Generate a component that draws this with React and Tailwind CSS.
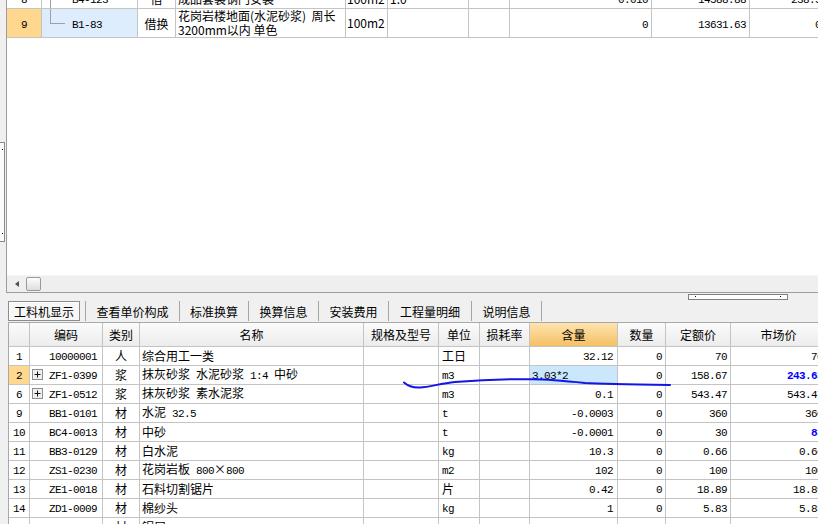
import React from 'react';

const mono = "font-['Liberation_Mono',monospace] text-[11px] tracking-[-0.6px]";
const cjk = "font-['Noto_Sans_CJK_SC',sans-serif] text-[12px]";
const cell = 'shrink-0 h-full border-r border-[#c4c4c4] flex items-center overflow-hidden whitespace-nowrap';

// splits a string into ascii (mono) and chinese runs, like the grid's mixed font
function T({ s, sans, className = '' }) {
  if (sans) return <span className={`${cjk} leading-[14px] ${className}`}>{s}</span>;
  const parts = String(s).split(/([\x20-\x7e]+)/).filter(Boolean);
  return (
    <span className={`leading-[14px] ${className}`}>
      {parts.map((p, i) =>
        /^[\x20-\x7e]+$/.test(p)
          ? <span key={i} className={mono}>{p}</span>
          : <span key={i} className={cjk}>{p}</span>
      )}
    </span>
  );
}

function Plus() {
  return (
    <svg width="11" height="11" viewBox="0 0 11 11" className="shrink-0">
      <rect x="0.5" y="0.5" width="10" height="10" fill="#efefef" stroke="#8e8e8e" />
      <path d="M2.5 5.5h6M5.5 2.5v6" stroke="#111" strokeWidth="1" />
    </svg>
  );
}

const rows = [
  { n: '1', code: '10000001', type: '人', name: '综合用工一类', unit: '工日', qty: '32.12', num: '0', price: '70', market: '70' },
  { n: '2', plus: true, sel: true, code: 'ZF1-0399', type: '浆', name: '抹灰砂浆 水泥砂浆 1:4 中砂', unit: 'm3', qty: '3.03*2', num: '0', price: '158.67', market: '243.63', blue: true },
  { n: '6', plus: true, code: 'ZF1-0512', type: '浆', name: '抹灰砂浆 素水泥浆', unit: 'm3', qty: '0.1', num: '0', price: '543.47', market: '543.47' },
  { n: '9', code: 'BB1-0101', type: '材', name: '水泥 32.5', unit: 't', qty: '-0.0003', num: '0', price: '360', market: '360' },
  { n: '10', code: 'BC4-0013', type: '材', name: '中砂', unit: 't', qty: '-0.0001', num: '0', price: '30', market: '83', blue: true },
  { n: '11', code: 'BB3-0129', type: '材', name: '白水泥', unit: 'kg', qty: '10.3', num: '0', price: '0.66', market: '0.66' },
  { n: '12', code: 'ZS1-0230', type: '材', name: '花岗岩板 800×800', unit: 'm2', qty: '102', num: '0', price: '100', market: '100' },
  { n: '13', code: 'ZE1-0018', type: '材', name: '石料切割锯片', unit: '片', qty: '0.42', num: '0', price: '18.89', market: '18.89' },
  { n: '14', code: 'ZD1-0009', type: '材', name: '棉纱头', unit: 'kg', qty: '1', num: '0', price: '5.83', market: '5.83' },
  { n: '15', code: 'ZA1-0040', type: '材', name: '锯屑', unit: 'm3', qty: '0.6', num: '0', price: '44.5', market: '44.5' },
];

const tabs = [
  { label: '查看单价构成', w: 'w-[93px]' },
  { label: '标准换算', w: 'w-[68px]' },
  { label: '换算信息', w: 'w-[69px]' },
  { label: '安装费用', w: 'w-[69px]' },
  { label: '工程量明细', w: 'w-[82px]' },
  { label: '说明信息', w: 'w-[69px]' },
];

function TopRow8() {
  return (
    <div className="flex h-[20px] -mt-[11px] border-b border-[#c4c4c4] shrink-0">
      <div className={`w-[35px] ${cell} justify-center`}><T s="8" /></div>
      <div className={`w-[96px] ${cell}`}>
        <div className="ml-[8px] w-px h-full bg-[#a0a0a0] shrink-0" />
        <T s="B4-123" className="ml-[21px]" />
      </div>
      <div className={`w-[38px] ${cell} justify-center`}><T s="借" /></div>
      <div className={`w-[170px] ${cell} pl-[2px]`}><T s="成品套装钢门安装" sans /></div>
      <div className={`w-[42px] ${cell} pl-[1px]`}><T s="100m2" sans /></div>
      <div className={`w-[81px] ${cell} pl-[2px]`}><T s="1.0" sans /></div>
      <div className={`w-[41px] ${cell}`} />
      <div className={`w-[142px] ${cell} justify-end pr-[3px]`}><T s="0.010" /></div>
      <div className={`w-[98px] ${cell} justify-end pr-[3px]`}><T s="14588.88" /></div>
      <div className={`w-[75px] ${cell} justify-end pr-[3px]`}><T s="238.5" /></div>
    </div>
  );
}

function TopRow9() {
  return (
    <div className="flex h-[29px] border-b border-[#c4c4c4] shrink-0">
      <div className={`w-[35px] ${cell} justify-center bg-[#ffd78f]`}><T s="9" /></div>
      <div className={`w-[96px] ${cell} bg-[#ddedfd]`}>
        <div className="ml-[8px] w-[15px] h-[15px] border-l border-b border-[#a0a0a0] self-start shrink-0" />
        <T s="B1-83" className="ml-[7px]" />
      </div>
      <div className={`w-[38px] ${cell} justify-center`}><T s="借换" /></div>
      <div className={`w-[170px] ${cell} pl-[2px] whitespace-normal`}>
        <div className={`${cjk} leading-[14px] text-black`}>
          <div className="whitespace-pre">花岗岩楼地面(水泥砂浆)  周长</div>
          <div className="whitespace-nowrap">3200mm以内 单色</div>
        </div>
      </div>
      <div className={`w-[42px] ${cell} pl-[1px]`}><T s="100m2" sans /></div>
      <div className={`w-[81px] ${cell}`} />
      <div className={`w-[41px] ${cell}`} />
      <div className={`w-[142px] ${cell} justify-end pr-[3px]`}><T s="0" /></div>
      <div className={`w-[98px] ${cell} justify-end pr-[3px]`}><T s="13631.63" /></div>
      <div className={`w-[75px] ${cell} justify-end pr-[3px]`}><T s="0" /></div>
    </div>
  );
}

function HeaderRow() {
  const h = `${cell} justify-center`;
  return (
    <div className="flex h-[24px] border-b border-[#c4c4c4] bg-gradient-to-b from-[#fbfbfb] to-[#ececec]">
      <div className={`w-[21px] ${h}`} />
      <div className={`w-[73px] ${h}`}><T s="编码" /></div>
      <div className={`w-[37px] ${h}`}><T s="类别" /></div>
      <div className={`w-[224px] ${h}`}><T s="名称" /></div>
      <div className={`w-[75px] ${h}`}><T s="规格及型号" /></div>
      <div className={`w-[41px] ${h}`}><T s="单位" /></div>
      <div className={`w-[50px] ${h}`}><T s="损耗率" /></div>
      <div className={`w-[88px] ${h} bg-gradient-to-b from-[#fde4ad] to-[#f4c062]`}><T s="含量" /></div>
      <div className={`w-[48px] ${h}`}><T s="数量" /></div>
      <div className={`w-[65px] ${h}`}><T s="定额价" /></div>
      <div className={`w-[96px] ${h}`}><T s="市场价" /></div>
    </div>
  );
}

function DataRow({ r }) {
  const c = `${cell} pb-px`;
  return (
    <div className="flex h-[19px] border-b border-[#c4c4c4] bg-white text-black">
      <div className={`w-[21px] ${c} justify-center ${r.sel ? 'bg-[#ffd78f]' : ''}`}><T s={r.n} /></div>
      <div className={`w-[73px] ${c} pl-[2px]`}>
        {r.plus ? <Plus /> : <span className="w-[11px] shrink-0" />}
        <T s={r.code} className="ml-[6px]" />
      </div>
      <div className={`w-[37px] ${c} justify-center`}><T s={r.type} /></div>
      <div className={`w-[224px] ${c} pl-[2px]`}><T s={r.name} /></div>
      <div className={`w-[75px] ${c}`} />
      <div className={`w-[41px] ${c} pl-[3px]`}><T s={r.unit} /></div>
      <div className={`w-[50px] ${c}`} />
      {r.sel ? (
        <div className={`w-[88px] ${c} pl-[2px] pb-[2px] bg-[#cae7fb]`}><T s={r.qty} /></div>
      ) : (
        <div className={`w-[88px] ${c} justify-end pr-[4px]`}><T s={r.qty} /></div>
      )}
      <div className={`w-[48px] ${c} justify-end pr-[3px]`}><T s={r.num} /></div>
      <div className={`w-[65px] ${c} justify-end pr-[3px]`}><T s={r.price} /></div>
      <div className={`w-[96px] ${c} justify-end pr-[3px]`}>
        <T s={r.market} className={r.blue ? 'text-[#0000ff] font-bold' : ''} />
      </div>
    </div>
  );
}

export default function App() {
  return (
    <div className="relative w-[818px] h-[524px] overflow-hidden bg-[#f0f0f0] text-black">

      {/* ── Upper grid (quota list) ── */}
      <div className="ml-[6px] h-[293px] border-l border-b border-[#9c9c9c] bg-white flex flex-col overflow-hidden">
        <TopRow8 />
        <TopRow9 />
        <div className="flex-1" />
        <div className="h-[17px] shrink-0 bg-[#efefef] border-t border-[#f6f6f6] flex items-center">
          <svg width="4" height="6" viewBox="0 0 4 6" className="ml-[8px] shrink-0">
            <path d="M4 0v6L0 3z" fill="#505050" />
          </svg>
          <div className="ml-[7px] w-[15px] h-[14px] rounded-[2px] border border-[#9a9a9a] bg-gradient-to-b from-[#fdfdfd] to-[#dedede]" />
        </div>
      </div>

      {/* ── Tabs ── */}
      <div className="relative h-[29px] flex items-start pt-[8px]">
        <div className="ml-[8px] w-[72px] h-[20px] border border-[#8c8c8c] bg-[#f7f7f7] shadow-[inset_1px_1px_0_#fff] flex items-center justify-center">
          <T s="工料机显示" />
        </div>
        <div className="ml-[5px] w-px h-[20px] bg-[#a4a4a4]" />
        {tabs.map(t => (
          <React.Fragment key={t.label}>
            <div className={`${t.w} h-[20px] flex items-center justify-center`}><T s={t.label} /></div>
            <div className="w-px h-[20px] bg-[#a4a4a4]" />
          </React.Fragment>
        ))}
        <div className="absolute left-[688px] top-[1px] w-[100px] h-[6px] border border-[#808080] bg-white">
          <span className="absolute left-[6px] top-[1px] w-px h-px bg-[#000080]" />
          <span className="absolute right-[6px] top-[1px] w-px h-px bg-[#000080]" />
        </div>
      </div>

      {/* ── Lower grid (labour / material / machine) ── */}
      <div className="ml-[8px] w-max border-l border-t border-[#a8a8a8]">
        <HeaderRow />
        {rows.map(r => <DataRow key={r.n} r={r} />)}
      </div>

      {/* splitter handle on the left edge */}
      <div className="absolute left-[-5px] top-[142px] w-[10px] h-[100px] border border-[#8a8a8a] bg-[#fafafa]">
        <span className="absolute left-[6px] top-[6px] w-px h-px bg-[#000080]" />
        <span className="absolute left-[6px] bottom-[7px] w-px h-px bg-[#000080]" />
      </div>

      {/* hand-drawn pen mark */}
      <svg className="absolute left-0 top-0 pointer-events-none" width="818" height="524" viewBox="0 0 818 524">
        <path
          d="M404 382.5 C408 386 413 388 420 387.5 C430 387 440 383.5 455 382 C480 380 510 379 533 379.3 C550 379.5 565 381 585 383 C600 384 630 384.5 670 385"
          fill="none" stroke="#1414e6" strokeWidth="2" strokeLinecap="round"
        />
      </svg>
    </div>
  );
}
